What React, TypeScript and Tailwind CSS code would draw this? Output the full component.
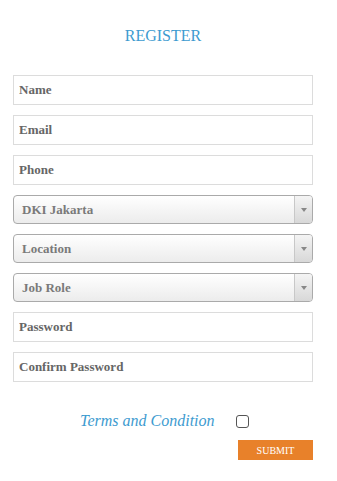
import { useState } from "react";

const serif = "font-[family-name:Liberation_Serif,Times_New_Roman,serif]";

function TextField({ label }: { label: string }) {
  return (
    <input
      type="text"
      placeholder={label}
      className={`h-[30px] w-full border border-[#dcdcdc] bg-white px-[5px] text-[13px] font-bold text-[#666] placeholder:text-[#666] outline-none ${serif}`}
    />
  );
}

function SelectField({ label }: { label: string }) {
  return (
    <div className="flex h-[29px] w-full overflow-hidden rounded-[4px] border border-[#aaa] bg-gradient-to-b from-white to-[#ececec]">
      <span className={`flex flex-1 items-center pl-[8px] text-[13px] font-bold text-[#7a7a7a] ${serif}`}>{label}</span>
      <span className="flex w-[18px] items-center justify-center border-l border-[#c8c8c8] bg-gradient-to-b from-[#f4f4f4] to-[#d8d8d8]">
        <svg width="6" height="4" viewBox="0 0 6 4">
          <path d="M0 0h6L3 4z" fill="#888" />
        </svg>
      </span>
    </div>
  );
}

export default function App() {
  const [agree, setAgree] = useState(false);

  return (
    <main className="min-h-[481px] w-[337px] bg-white pl-[13px] pr-[24px]">
      <h1 className={`pt-[27px] text-center text-[16px] leading-[18px] text-[#3d9bd0] ${serif}`}>REGISTER</h1>

      <form className="mt-[30px] flex flex-col" onSubmit={(event) => event.preventDefault()}>
        <div className="flex flex-col gap-[10px]">
          <TextField label="Name" />
          <TextField label="Email" />
          <TextField label="Phone" />
          <SelectField label="DKI Jakarta" />
          <SelectField label="Location" />
          <SelectField label="Job Role" />
          <TextField label="Password" />
          <TextField label="Confirm Password" />
        </div>

        <div className="mt-[29px] flex h-[20px] items-center pl-[67px]">
          <span className={`text-[16px] italic leading-[20px] text-[#3d9bd0] ${serif}`}>Terms and Condition</span>
          <input
            type="checkbox"
            checked={agree}
            onChange={(event) => setAgree(event.target.checked)}
            className="ml-[21px] h-[13px] w-[13px] appearance-none rounded-[3px] border border-[#555] bg-white"
          />
        </div>

        <div className="mt-[9px] flex justify-end">
          <button
            type="submit"
            className={`h-[20px] w-[75px] bg-[#e8812a] text-[10px] text-white ${serif}`}
          >
            SUBMIT
          </button>
        </div>
      </form>
    </main>
  );
}
